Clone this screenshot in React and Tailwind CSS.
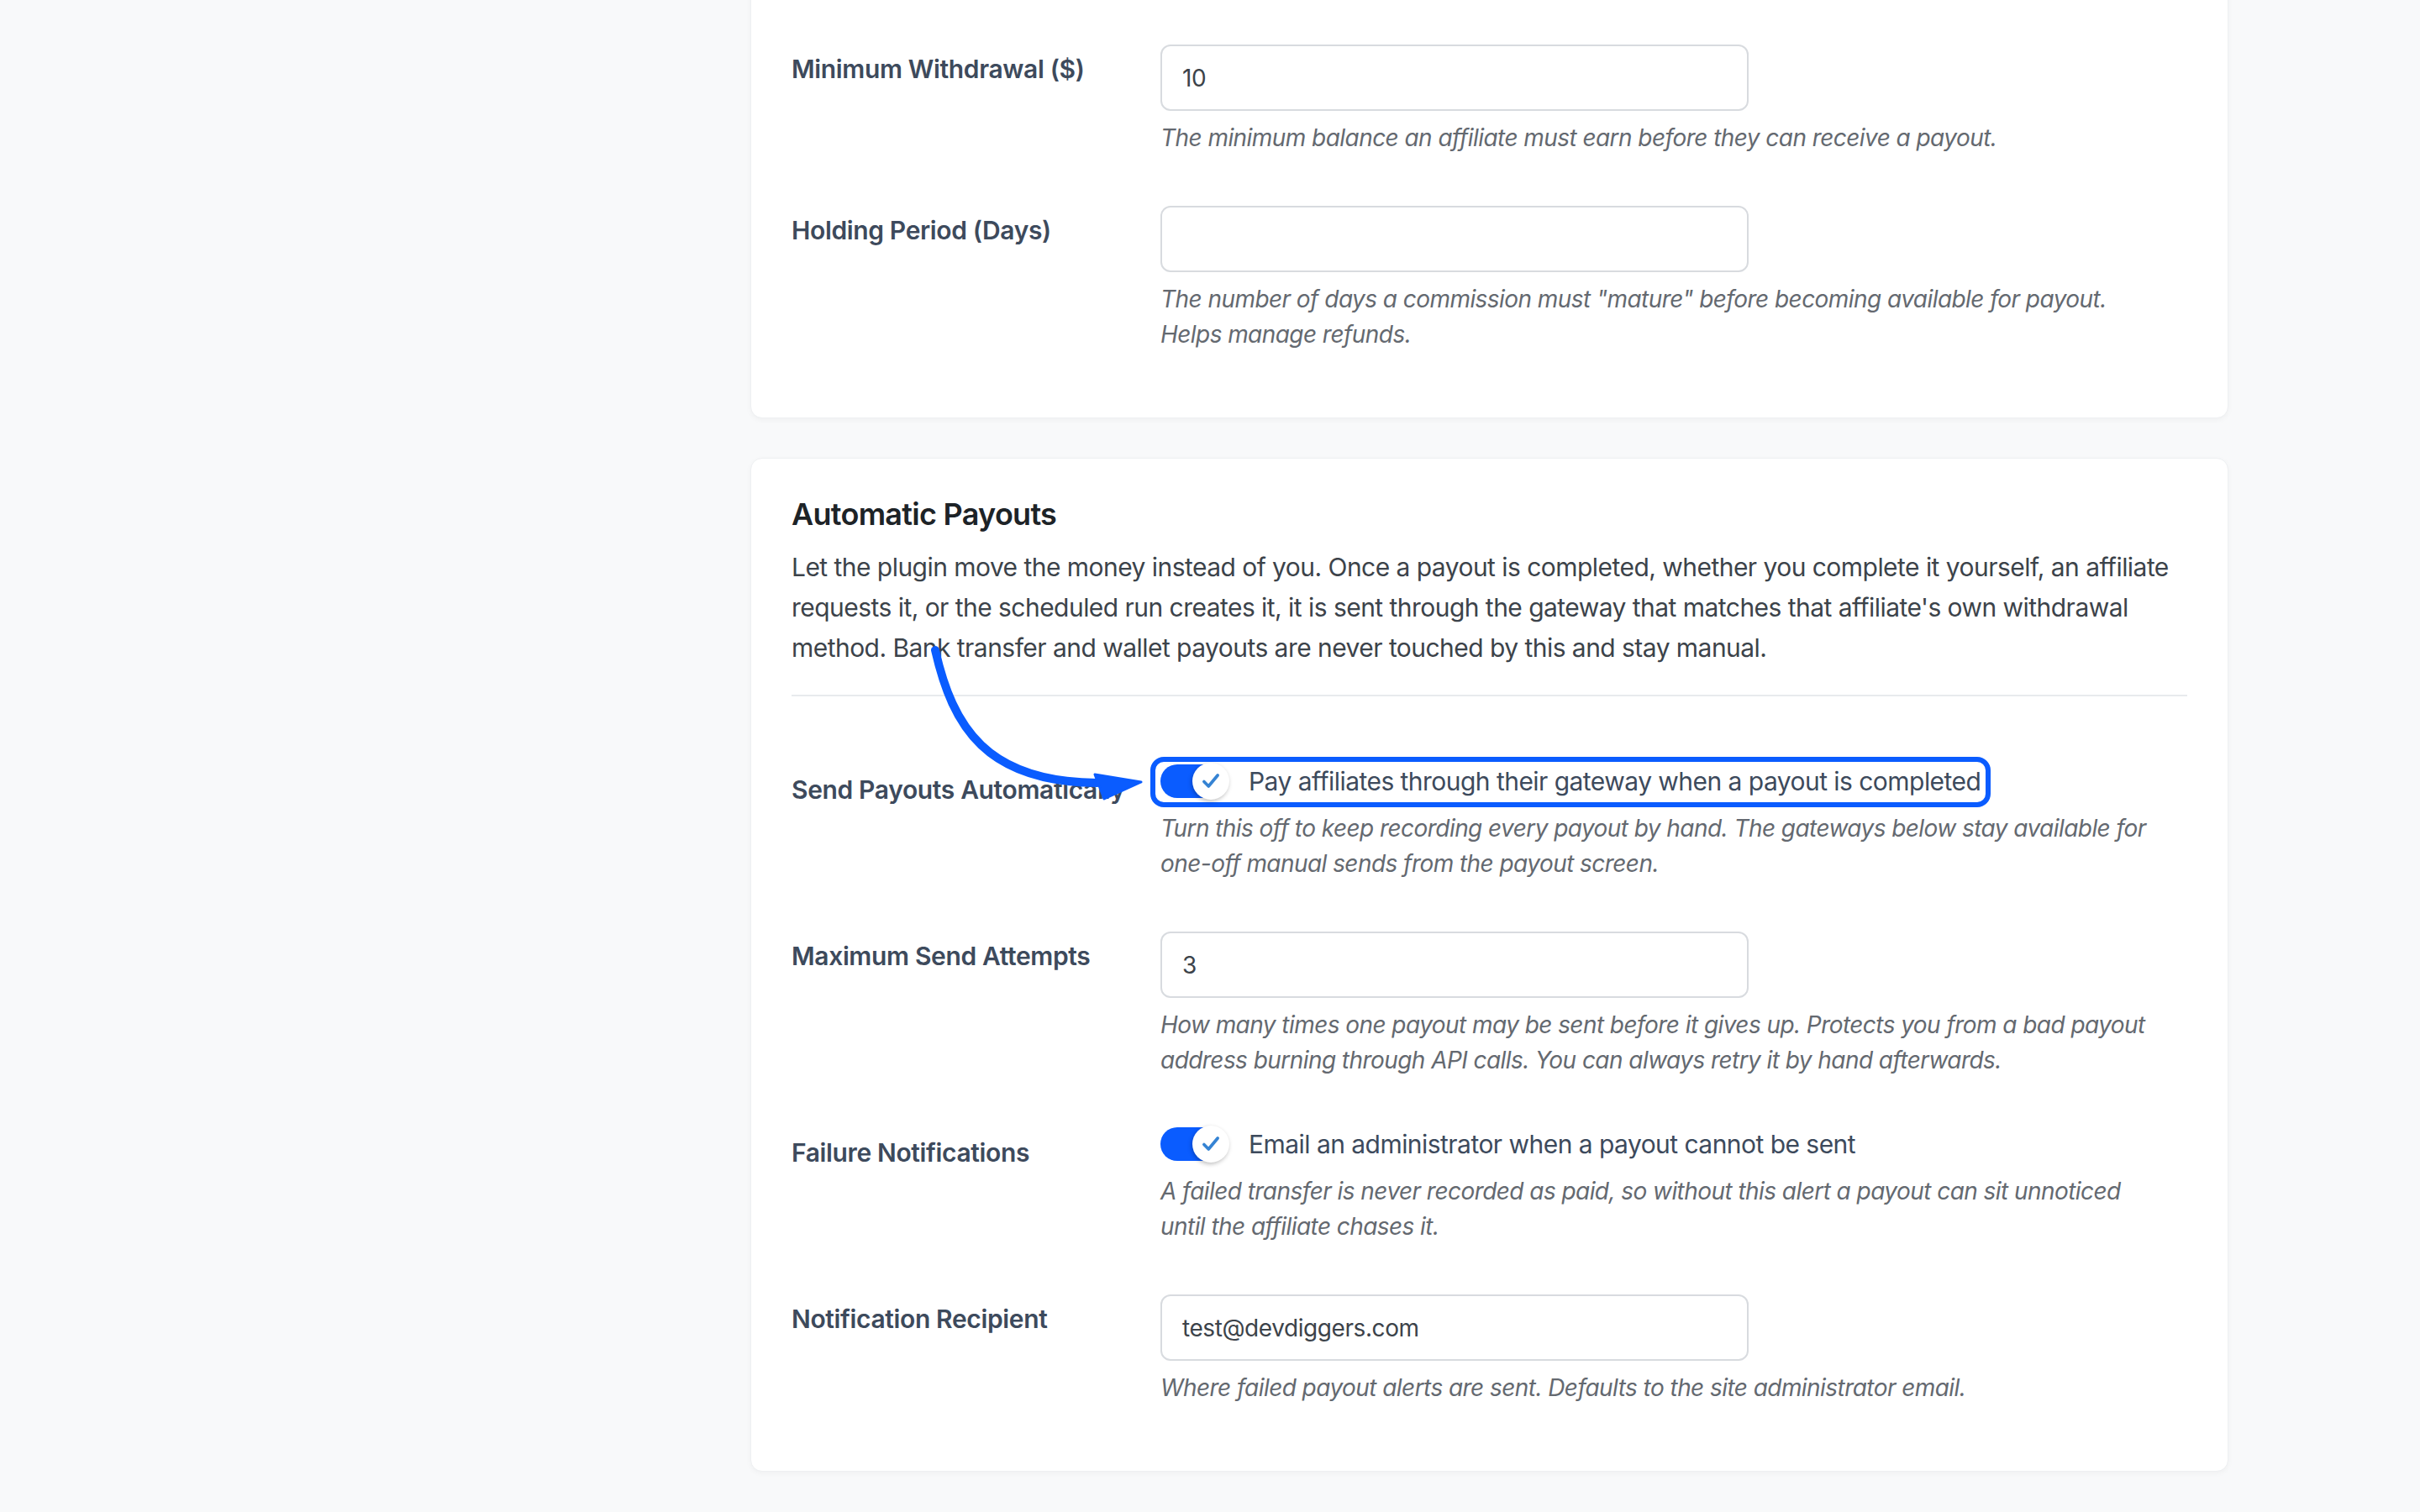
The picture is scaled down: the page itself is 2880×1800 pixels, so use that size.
import React from "react";

const FONT = "font-['Inter','Noto_Sans','Liberation_Sans',sans-serif]";

function Label({ children }) {
  return (
    <div className="w-[439px] shrink-0 pt-[10px] text-[30px] leading-[38px] font-semibold tracking-[-0.012em] text-[#3d4a5c]">
      {children}
    </div>
  );
}

function Help({ children, tight }) {
  return (
    <p
      className={`${tight ? "mt-[9px]" : "mt-[11px]"} text-[28px] leading-[42px] italic tracking-[-0.02em] text-[#646970] whitespace-nowrap`}
    >
      {children}
    </p>
  );
}

function TextInput({ value }) {
  return (
    <div className="w-[700px] h-[79px] rounded-[12px] border-2 border-[#d8dbdf] bg-white flex items-center px-[24px] text-[28px] tracking-[-0.015em] text-[#3c434a]">
      {value}
    </div>
  );
}

function Toggle() {
  return (
    <div className="relative w-[80px] h-[40px] rounded-full bg-[#0a5cff] shrink-0">
      <div className="absolute -right-[2px] -top-[2px] w-[44px] h-[44px] rounded-full bg-white shadow-[-1px_2px_5px_rgba(0,0,0,0.25)] flex items-center justify-center">
        <svg width="26" height="26" viewBox="0 0 24 24" fill="none">
          <path d="M4.5 12.5l5 5L19.5 5.5" stroke="#3583d3" strokeWidth="3.4" strokeLinecap="round" strokeLinejoin="round" />
        </svg>
      </div>
    </div>
  );
}

function Row({ label, children }) {
  return (
    <div className="flex py-[30px]">
      <Label>{label}</Label>
      <div className="flex-1 pr-[20px]">{children}</div>
    </div>
  );
}

export default function App() {
  return (
    <div className={`min-h-screen bg-[#f8f9fa] ${FONT} overflow-hidden`}>
      <div className="ml-[893px] w-[1759px] -mt-[26px] flex flex-col gap-[47px] pb-[60px]">
        {/* Card 1 */}
        <div className="rounded-[14px] bg-white border border-[#eef0f2] shadow-[0_2px_6px_rgba(0,0,0,0.04)] px-[48px] pt-[48px] pb-[48px]">
          <Row label="Minimum Withdrawal ($)">
            <TextInput value="10" />
            <Help>The minimum balance an affiliate must earn before they can receive a payout.</Help>
          </Row>
          <Row label="Holding Period (Days)">
            <TextInput value="" />
            <Help>
              The number of days a commission must "mature" before becoming available for payout.
              <br />
              Helps manage refunds.
            </Help>
          </Row>
        </div>

        {/* Card 2 */}
        <div className="relative rounded-[14px] bg-white border border-[#eef0f2] shadow-[0_2px_6px_rgba(0,0,0,0.04)] px-[48px] pt-[48px] pb-[48px]">
          <h2 className="text-[36px] leading-[36px] font-semibold tracking-[-0.02em] text-[#1d2327]">Automatic Payouts</h2>
          <p className="mt-[21px] text-[30px] leading-[48px] tracking-[-0.018em] text-[#3c434a] whitespace-nowrap">
            Let the plugin move the money instead of you. Once a payout is completed, whether you complete it yourself, an affiliate
            <br />
            requests it, or the scheduled run creates it, it is sent through the gateway that matches that affiliate's own withdrawal
            <br />
            method. Bank transfer and wallet payouts are never touched by this and stay manual.
          </p>
          <div className="mt-[32px] h-[2px] bg-[#e8eaed]" />
          <div className="mt-[52px]">
            <Row label="Send Payouts Automatically">
              <div className="relative inline-flex items-center gap-[25px] h-[38px]">
                <div className="absolute -left-[12px] -right-[12px] -top-[10px] -bottom-[12px] border-[6px] border-[#0a5cff] rounded-[16px]" />
                <Toggle />
                <span className="text-[30px] leading-[38px] tracking-[-0.018em] text-[#3d4a5c] whitespace-nowrap">
                  Pay affiliates through their gateway when a payout is completed
                </span>
              </div>
              <Help tight>
                Turn this off to keep recording every payout by hand. The gateways below stay available for
                <br />
                one-off manual sends from the payout screen.
              </Help>
            </Row>
            <Row label="Maximum Send Attempts">
              <TextInput value="3" />
              <Help>
                How many times one payout may be sent before it gives up. Protects you from a bad payout
                <br />
                address burning through API calls. You can always retry it by hand afterwards.
              </Help>
            </Row>
            <Row label="Failure Notifications">
              <div className="inline-flex items-center gap-[25px] h-[38px]">
                <Toggle />
                <span className="text-[30px] leading-[38px] tracking-[-0.018em] text-[#3d4a5c] whitespace-nowrap">
                  Email an administrator when a payout cannot be sent
                </span>
              </div>
              <Help tight>
                A failed transfer is never recorded as paid, so without this alert a payout can sit unnoticed
                <br />
                until the affiliate chases it.
              </Help>
            </Row>
            <Row label="Notification Recipient">
              <TextInput value="test@devdiggers.com" />
              <Help>Where failed payout alerts are sent. Defaults to the site administrator email.</Help>
            </Row>
          </div>

          {/* Annotation arrow */}
          <svg
            className="absolute left-0 top-0 pointer-events-none"
            width="500"
            height="450"
            viewBox="0 0 500 450"
            fill="none"
          >
            <path
              d="M219 228 C 240 320, 280 385, 412 386"
              stroke="#0a5cff"
              strokeWidth="10"
              strokeLinecap="round"
              fill="none"
            />
            <path d="M409 376 L464 385 L420 405 Z" fill="#0a5cff" stroke="#0a5cff" strokeWidth="3" strokeLinejoin="round" />
          </svg>
        </div>
      </div>
    </div>
  );
}
